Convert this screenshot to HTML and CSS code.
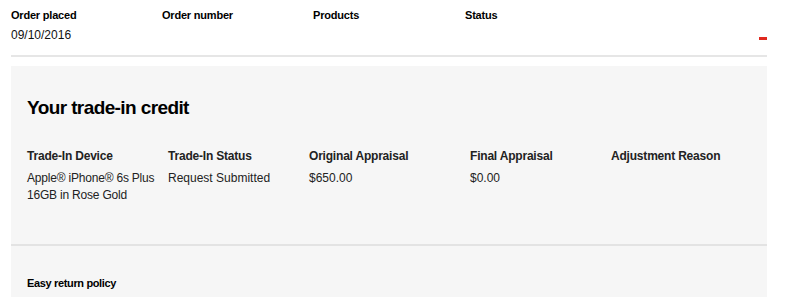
FILE: index.html
```html
<!DOCTYPE html>
<html lang="en">
<head>
  <meta charset="UTF-8" />
  <meta name="viewport" content="width=device-width, initial-scale=1.0"/>
  <title>Order details</title>
  <link rel="stylesheet" href="styles.css">
</head>
<body>
  <div class="page">
    <div class="order-head">
      <div class="label">Order placed</div>
      <div class="label">Order number</div>
      <div class="label">Products</div>
      <div class="label">Status</div>
      <div class="value">09/10/2016</div>
      <div class="value"></div>
      <div class="value"></div>
      <div class="value status"><span class="dash"></span></div>
    </div>

    <div class="rule"></div>

    <div class="trade-in">
      <div class="trade-in-body">
        <h2>Your trade-in credit</h2>
        <div class="trade-grid">
          <div class="col-label">Trade-In Device</div>
          <div class="col-label">Trade-In Status</div>
          <div class="col-label">Original Appraisal</div>
          <div class="col-label">Final Appraisal</div>
          <div class="col-label">Adjustment Reason</div>
          <div class="col-value device">Apple® iPhone® 6s Plus 16GB in Rose Gold</div>
          <div class="col-value">Request Submitted</div>
          <div class="col-value">$650.00</div>
          <div class="col-value">$0.00</div>
          <div class="col-value"></div>
        </div>
      </div>
      <div class="panel-rule"></div>
      <div class="policy">
        <h3>Easy return policy</h3>
      </div>
    </div>
  </div>
</body>
</html>
```

FILE: styles.css
```css
body {
  margin: 0;
  padding: 0;
  background: #fff;
  font-family: 'Liberation Sans', Arial, sans-serif;
  color: #000;
}

.page {
  width: 756px;
  margin-left: 11px;
  padding-top: 8px;
}

.order-head {
  display: grid;
  grid-template-columns: 151px 151px 152px 1fr;
  row-gap: 5px;
}

.label {
  font-size: 11px;
  font-weight: bold;
  line-height: 14px;
  letter-spacing: -0.2px;
}

.value {
  font-size: 12px;
  line-height: 16px;
  color: #111;
}

.status {
  display: flex;
  justify-content: flex-end;
  align-items: flex-start;
}

.dash {
  display: block;
  width: 8px;
  height: 3px;
  background: #e0291f;
  margin-top: 10px;
}

.rule {
  height: 2px;
  background: #e6e6e6;
  margin-top: 12px;
}

.trade-in {
  margin-top: 9px;
  background: #f6f6f6;
}

.trade-in-body {
  padding: 30px 16px 40px;
}

h2 {
  margin: 0;
  font-size: 19px;
  line-height: 24px;
  letter-spacing: -0.6px;
  font-weight: bold;
}

.trade-grid {
  display: grid;
  grid-template-columns: 141px 141px 161px 141px 1fr;
  margin-top: 28px;
  row-gap: 6px;
}

.col-label {
  font-size: 12px;
  font-weight: bold;
  line-height: 16px;
  letter-spacing: -0.2px;
  color: #222;
}

.col-value {
  font-size: 12px;
  line-height: 17px;
  color: #222;
}

.device {
  letter-spacing: -0.2px;
}

.panel-rule {
  height: 2px;
  background: #e3e3e3;
}

.policy {
  padding: 30px 16px 20px;
}

h3 {
  margin: 0;
  font-size: 11px;
  line-height: 14px;
  letter-spacing: -0.35px;
  font-weight: bold;
}
```
